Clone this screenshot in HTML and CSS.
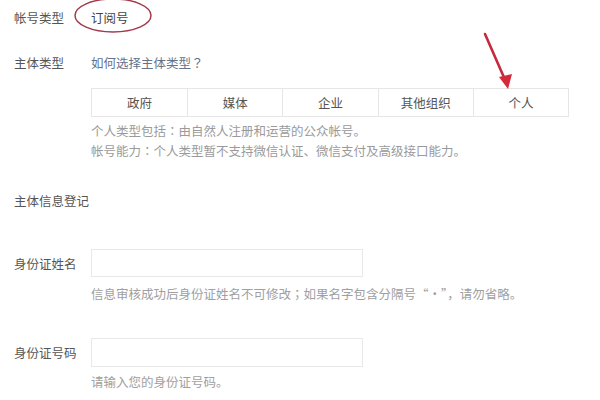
FILE: index.html
```html
<!DOCTYPE html>
<html lang="zh-CN">
<head>
<meta charset="utf-8">
<title>主体信息登记</title>
<link rel="stylesheet" href="styles.css">
</head>
<body>
<div class="page">
  <div class="row row-account">
    <span class="label">帐号类型</span>
    <span class="value">订阅号</span>
  </div>
  <div class="row row-subject">
    <span class="label">主体类型</span>
    <a class="link" href="#">如何选择主体类型<span class="pc" lang="zh-TW">？</span></a>
  </div>
  <div class="types">
    <div class="type">政府</div>
    <div class="type">媒体</div>
    <div class="type">企业</div>
    <div class="type">其他组织</div>
    <div class="type">个人</div>
  </div>
  <div class="notes">
    <p>个人类型包括<span class="pc" lang="zh-TW">：</span>由自然人注册和运营的公众帐号。</p>
    <p>帐号能力<span class="pc" lang="zh-TW">：</span>个人类型暂不支持微信认证、微信支付及高级接口能力。</p>
  </div>
  <div class="section">主体信息登记</div>
  <div class="field field-name">
    <div class="field-row">
      <span class="label">身份证姓名</span>
      <div class="input"></div>
    </div>
    <p class="hint">信息审核成功后身份证姓名不可修改<span class="pc" lang="zh-TW">；</span>如果名字包含分隔号“·”，请勿省略。</p>
  </div>
  <div class="field field-id">
    <div class="field-row">
      <span class="label">身份证号码</span>
      <div class="input"></div>
    </div>
    <p class="hint">请输入您的身份证号码。</p>
  </div>
  <svg class="annot" width="600" height="400" viewBox="0 0 600 400">
    <ellipse cx="113" cy="15.5" rx="38" ry="16.5" fill="none" stroke="#a33a4c" stroke-width="1.5"/>
    <line x1="485" y1="34" x2="506" y2="82" stroke="#c42a3c" stroke-width="2.6" stroke-linecap="round"/>
    <polygon points="499,77 512,74 508,89" fill="#d42a3a"/>
  </svg>
</div>
</body>
</html>
```

FILE: styles.css
```css
html, body {
  margin: 0;
  padding: 0;
  background: #ffffff;
}

.page {
  position: relative;
  width: 600px;
  height: 400px;
  overflow: hidden;
  padding-left: 14px;
  box-sizing: border-box;
  font-family: "Noto Sans CJK SC", "Noto Sans", sans-serif;
  font-size: 12.5px;
  color: #555555;
}

.pc {
  font-family: "Noto Sans CJK TC", "Noto Sans CJK SC", sans-serif;
}

.row {
  display: flex;
  align-items: center;
  height: 34px;
}

.label {
  width: 77px;
  flex: none;
  color: #555555;
}

.value {
  color: #444444;
}

.row-subject {
  margin-top: 11px;
}

.link {
  color: #64728c;
  text-decoration: none;
}

.types {
  margin-top: 9px;
  margin-left: 77px;
  width: 478px;
  height: 29px;
  box-sizing: border-box;
  display: grid;
  grid-template-columns: repeat(5, 1fr);
  border: 1px solid #e6e6e6;
}

.type {
  display: flex;
  align-items: center;
  justify-content: center;
  color: #555555;
  border-left: 1px solid #e6e6e6;
}

.type:first-child {
  border-left: none;
}

.notes {
  margin-top: 4px;
  margin-left: 77px;
  color: #9a9a9a;
  line-height: 20px;
}

.notes p,
.hint {
  margin: 0;
}

.section {
  margin-top: 30px;
  line-height: 20px;
  color: #555555;
}

.field-row {
  display: flex;
  align-items: center;
}

.input {
  width: 272px;
  height: 28px;
  box-sizing: border-box;
  border: 1px solid #e8e8e8;
  background: #ffffff;
}

.field-name {
  margin-top: 38px;
}

.field-id {
  margin-top: 34px;
}

.field-id .input {
  height: 29px;
}

.hint {
  margin-left: 77px;
  color: #a0a0a0;
  line-height: 20px;
}

.field-name .hint {
  margin-top: 7px;
}

.field-id .hint {
  margin-top: 5px;
}

.annot {
  position: absolute;
  top: 0;
  left: 0;
  pointer-events: none;
}
```
